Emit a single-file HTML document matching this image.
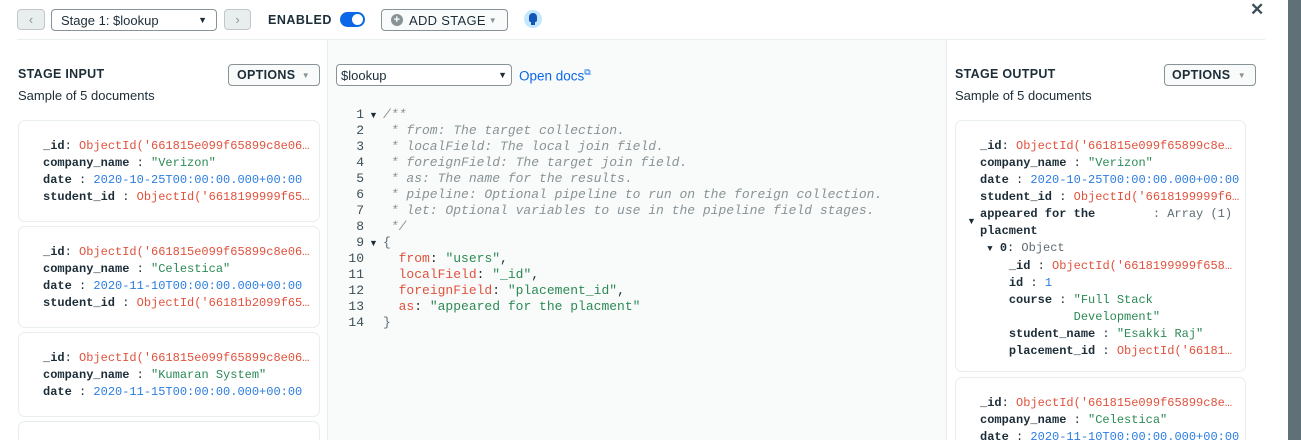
<!DOCTYPE html>
<html style="width:1301px;height:440px;overflow:hidden"><head><meta charset="utf-8"><style>
*{box-sizing:border-box;margin:0;padding:0}
body{width:1301px;height:440px;overflow:hidden;background:#fff;font-family:"Liberation Sans",sans-serif;color:#1c2d38;position:relative}
.abs{position:absolute}
.btn{position:absolute;border:1px solid #889397;border-radius:4px;background:#f9fbfa;font-size:13px;display:flex;align-items:center}
.mono{font-family:"Liberation Mono",monospace}
.card{position:absolute;border:1px solid #e8eded;border-radius:7px;background:#fff;font-size:12px;line-height:17px;padding-left:24px;white-space:pre;overflow:hidden}
.k{font-weight:bold;color:#1c2d38}
.r{color:#e0523d}.g{color:#2b8a55}.b{color:#2c7de0}.gr{color:#5d6c74}
.sub{font-size:13px;color:#1c2d38}
.hd{font-size:12.5px;font-weight:bold;letter-spacing:.3px;color:#1c2d38}
.ed{font-size:13px;line-height:16px;white-space:pre}
.c{color:#889397;font-style:italic}
</style></head><body>
<div class="btn" style="left:17px;top:9px;width:28px;height:21px;background:#e8eded;border-color:#c1c7c6;justify-content:center;color:#889397">&#8249;</div>
<div class="btn" style="left:51px;top:9px;width:166px;height:22px;padding-left:9px;background:#fff">Stage 1: $lookup<span style="position:absolute;right:9px;font-size:9px">▼</span></div>
<div class="btn" style="left:224px;top:9px;width:27px;height:21px;background:#e8eded;border-color:#c1c7c6;justify-content:center;color:#889397">&#8250;</div>
<div class="abs" style="left:268px;top:13px;font-size:12.5px;font-weight:bold;letter-spacing:.5px">ENABLED</div>
<div class="abs" style="left:340px;top:12px;width:25px;height:15px;border-radius:8px;background:#0a68e8"><div style="position:absolute;right:2px;top:2px;width:11px;height:11px;border-radius:50%;background:#fff"></div></div>
<div class="btn" style="left:381px;top:9px;width:127px;height:22px;padding-left:9px;letter-spacing:.3px"><span style="display:inline-block;width:12px;height:12px;border-radius:50%;background:#889397;color:#fff;font-size:11px;line-height:12px;text-align:center;margin-right:6px;font-weight:bold">+</span>ADD STAGE<span style="position:absolute;right:10px;font-size:8px;color:#889397">▼</span></div>
<div class="abs" style="left:524px;top:10px;width:18px;height:18px;border-radius:50%;background:#c3e7fe"><div style="position:absolute;left:5px;top:3px;width:8px;height:9px;border-radius:4px 4px 2px 2px;background:#1254b7"></div><div style="position:absolute;left:7px;top:12px;width:4px;height:3px;background:#1254b7"></div></div>
<div class="abs" style="left:1250px;top:0px;font-size:17px;font-weight:bold;color:#3d4f58">✕</div>
<div class="abs" style="left:17px;top:39px;width:1248px;height:1px;background:#e8eded"></div>
<div class="abs" style="left:1288px;top:0;width:13px;height:440px;background:#5f7077"></div>
<div class="abs" style="left:327px;top:40px;width:620px;height:400px;background:#f9fbfa;border-left:1px solid #e8eded;border-right:1px solid #e8eded"></div>
<div class="abs hd" style="left:18px;top:67px">STAGE INPUT</div>
<div class="abs sub" style="left:18px;top:88px">Sample of 5 documents</div>
<div class="btn" style="left:228px;top:64px;width:92px;height:22px;padding-left:8px;font-weight:bold;font-size:12.5px;letter-spacing:.3px">OPTIONS<span style="position:absolute;right:9px;font-size:8px;color:#889397">▼</span></div>
<div class="card mono" style="left:18px;top:120px;width:302px;height:102px;padding-top:17px"><span class="k">_id</span>: <span class="r">ObjectId('661815e099f65899c8e06…</span>
<span class="k">company_name</span> : <span class="g">"Verizon"</span>
<span class="k">date</span> : <span class="b">2020-10-25T00:00:00.000+00:00</span>
<span class="k">student_id</span> : <span class="r">ObjectId('6618199999f65…</span></div>
<div class="card mono" style="left:18px;top:226px;width:302px;height:102px;padding-top:17px"><span class="k">_id</span>: <span class="r">ObjectId('661815e099f65899c8e06…</span>
<span class="k">company_name</span> : <span class="g">"Celestica"</span>
<span class="k">date</span> : <span class="b">2020-11-10T00:00:00.000+00:00</span>
<span class="k">student_id</span> : <span class="r">ObjectId('66181b2099f65…</span></div>
<div class="card mono" style="left:18px;top:332px;width:302px;height:85px;padding-top:17px"><span class="k">_id</span>: <span class="r">ObjectId('661815e099f65899c8e06…</span>
<span class="k">company_name</span> : <span class="g">"Kumaran System"</span>
<span class="k">date</span> : <span class="b">2020-11-15T00:00:00.000+00:00</span></div>
<div class="card" style="left:18px;top:421px;width:302px;height:19px;border-bottom:none;border-radius:7px 7px 0 0"></div>
<div class="btn" style="left:336px;top:64px;width:176px;height:22px;padding-left:4px;background:#fff">$lookup<span style="position:absolute;right:4px;font-size:9px">▼</span></div>
<div class="abs" style="left:519px;top:67px;font-size:13.5px;color:#0a68e8">Open docs<sup style="font-size:9px">⧉</sup></div>
<div class="abs mono ed gr" style="left:340px;top:107px;text-align:right;width:24px;color:#3d4f58"> 1
 2
 3
 4
 5
 6
 7
 8
 9
10
11
12
13
14</div>
<div class="abs ed" style="left:369px;top:107px;font-size:9px;color:#1c2d38">▼</div>
<div class="abs ed" style="left:369px;top:235px;font-size:9px;color:#1c2d38">▼</div>
<div class="abs mono ed" style="left:383px;top:107px"><span class="c">/**
 * from: The target collection.
 * localField: The local join field.
 * foreignField: The target join field.
 * as: The name for the results.
 * pipeline: Optional pipeline to run on the foreign collection.
 * let: Optional variables to use in the pipeline field stages.
 */</span>
<span class="gr">{</span>
  <span class="r">from</span>: <span class="g">"users"</span>,
  <span class="r">localField</span>: <span class="g">"_id"</span>,
  <span class="r">foreignField</span>: <span class="g">"placement_id"</span>,
  <span class="r">as</span>: <span class="g">"appeared for the placment"</span>
<span class="gr">}</span></div>
<div class="abs hd" style="left:955px;top:67px">STAGE OUTPUT</div>
<div class="abs sub" style="left:955px;top:88px">Sample of 5 documents</div>
<div class="btn" style="left:1164px;top:64px;width:92px;height:22px;padding-left:7px;font-weight:bold;font-size:12.5px;letter-spacing:.3px">OPTIONS<span style="position:absolute;right:9px;font-size:8px;color:#889397">▼</span></div>
<div class="card mono" style="left:955px;top:120px;width:291px;height:252px;padding-top:17px"><span class="k">_id</span>: <span class="r">ObjectId('661815e099f65899c8e…</span>
<span class="k">company_name</span> : <span class="g">"Verizon"</span>
<span class="k">date</span> : <span class="b">2020-10-25T00:00:00.000+00:00</span>
<span class="k">student_id</span> : <span class="r">ObjectId('6618199999f6…</span>
<span class="k">appeared for the</span>        <span class="gr">: Array (1)</span>
<span class="k">placment</span>
 <span style="font-size:9px">▼</span> <span class="k">0</span>: <span class="gr">Object</span>
    <span class="k">_id</span> : <span class="r">ObjectId('6618199999f658…</span>
    <span class="k">id</span> : <span class="b">1</span>
    <span class="k">course</span> : <span class="g">"Full Stack</span>
             <span class="g">Development"</span>
    <span class="k">student_name</span> : <span class="g">"Esakki Raj"</span>
    <span class="k">placement_id</span> : <span class="r">ObjectId('66181…</span></div>
<div class="abs" style="left:967px;top:216px;font-size:9px">▼</div>
<div class="card mono" style="left:955px;top:377px;width:291px;height:63px;padding-top:17px;border-bottom:none;border-radius:7px 7px 0 0"><span class="k">_id</span>: <span class="r">ObjectId('661815e099f65899c8e…</span>
<span class="k">company_name</span> : <span class="g">"Celestica"</span>
<span class="k">date</span> : <span class="b">2020-11-10T00:00:00.000+00:00</span></div>
</body></html>
